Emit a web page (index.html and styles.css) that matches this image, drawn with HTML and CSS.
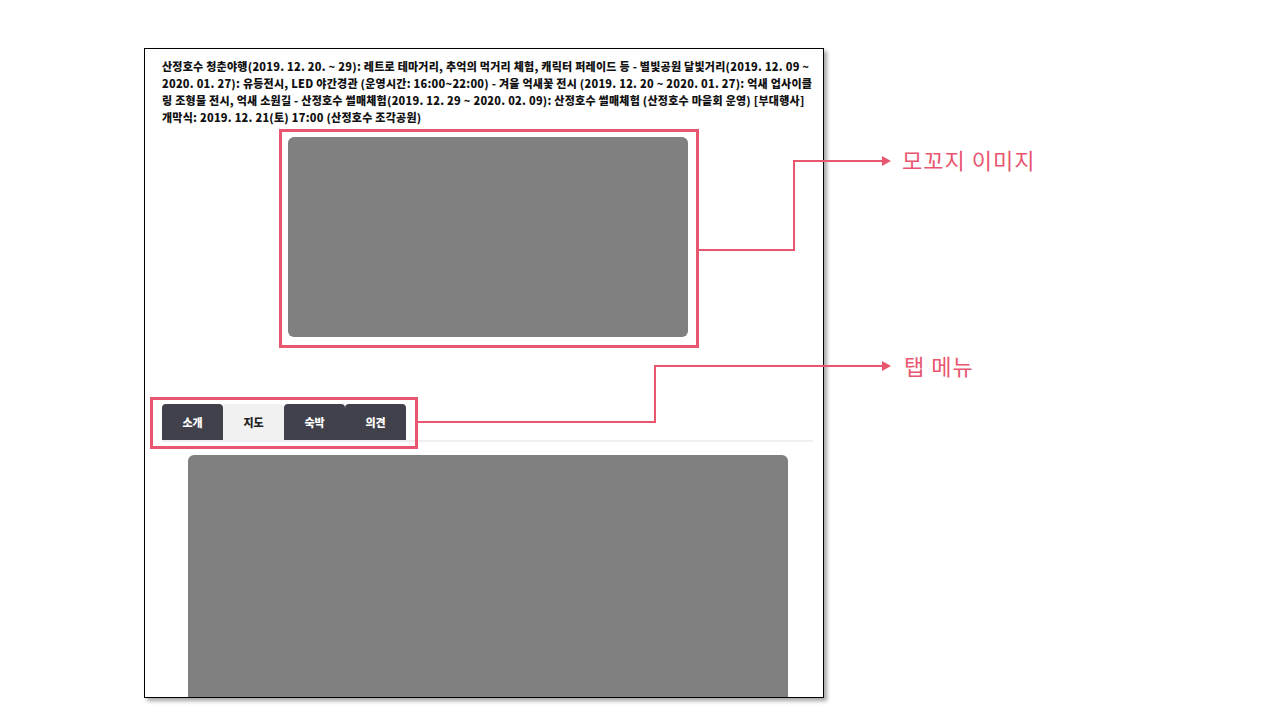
FILE: index.html
```html
<!DOCTYPE html>
<html>

<head>
    <title>모꼬지 상세</title>
    <link rel="stylesheet" href="styles.css">
</head>

<body>
    <div class="slide">
        <div class="frame">
            <p class="desc">산정호수 청춘야행(2019. 12. 20. ~ 29): 레트로 테마거리, 추억의 먹거리 체험, 캐릭터 퍼레이드 등 - 별빛공원 달빛거리(2019. 12. 09 ~ 2020. 01. 27): 유등전시, LED 야간경관 (운영시간: 16:00~22:00) - 겨울 억새꽃 전시 (2019. 12. 20 ~ 2020. 01. 27): 억새 업사이클링 조형물 전시, 억새 소원길 - 산정호수 썰매체험(2019. 12. 29 ~ 2020. 02. 09): 산정호수 썰매체험 (산정호수 마을회 운영) [부대행사] 개막식: 2019. 12. 21(토) 17:00 (산정호수 조각공원)</p>

            <div class="photo"></div>

            <div class="tabs">
                <button class="tab">소개</button>
                <button class="tab tab-on">지도</button>
                <button class="tab">숙박</button>
                <button class="tab">의견</button>
            </div>

            <div class="map"></div>
        </div>

        <!-- 설명 표시 -->
        <div class="mark mark-photo"></div>
        <div class="mark mark-tabs"></div>
        <svg class="lines" width="1280" height="720">
            <polyline points="699,250 794,250 794,161 884,161" />
            <polygon points="891,161 882,156 882,166" />
            <polyline points="417,422 655,422 655,366 884,366" />
            <polygon points="891,366 882,361 882,371" />
        </svg>
        <span class="note note-photo">모꼬지 이미지</span>
        <span class="note note-tabs">탭 메뉴</span>
    </div>
</body>

</html>
```

FILE: styles.css
```css
body {
    margin: 0;
    background-color: white;
    font-family: "Noto Sans CJK KR", "Noto Sans", sans-serif;
}

.slide {
    position: relative;
    width: 1280px;
    height: 720px;
    padding: 48px 0 0 144px;
    box-sizing: border-box;
}

.frame {
    width: 680px;
    height: 650px;
    box-sizing: border-box;
    border: 1px solid black;
    box-shadow: 3px 3px 4px rgba(0, 0, 0, 0.35);
    padding: 9px 10px 0 17px;
    overflow: hidden;
    background-color: white;
}

.desc {
    margin: 0;
    font-size: 11px;
    font-weight: 900;
    line-height: 17px;
    letter-spacing: 0.25px;
    color: #111;
}

.photo {
    width: 400px;
    height: 200px;
    margin: 11px auto 0;
    background-color: #808080;
    border-radius: 6px;
}

.tabs {
    display: flex;
    margin-top: 67px;
    border-bottom: 2px solid #f0f0f2;
}

.tab {
    width: 61px;
    height: 36px;
    border: none;
    border-radius: 4px 4px 0 0;
    background-color: #41414c;
    color: white;
    font-family: "Noto Sans CJK KR", sans-serif;
    font-size: 11px;
    font-weight: 900;
    padding: 0;
}

.tab-on {
    background-color: #f1f1f1;
    color: #222;
}

.map {
    width: 600px;
    height: 400px;
    margin: 13px auto 0;
    background-color: #808080;
    border-radius: 6px 6px 0 0;
}

.mark {
    position: absolute;
    border: 3px solid #e8566f;
    box-sizing: border-box;
}

.mark-photo {
    left: 279px;
    top: 129px;
    width: 420px;
    height: 219px;
}

.mark-tabs {
    left: 150px;
    top: 397px;
    width: 268px;
    height: 52px;
}

.lines {
    position: absolute;
    left: 0;
    top: 0;
}

.lines polyline {
    fill: none;
    stroke: #e8566f;
    stroke-width: 2;
}

.lines polygon {
    fill: #e8566f;
}

.note {
    position: absolute;
    font-size: 22px;
    letter-spacing: 1px;
    color: #e8566f;
    line-height: 26px;
}

.note-photo {
    left: 902px;
    top: 146px;
}

.note-tabs {
    left: 904px;
    top: 352px;
}
```
